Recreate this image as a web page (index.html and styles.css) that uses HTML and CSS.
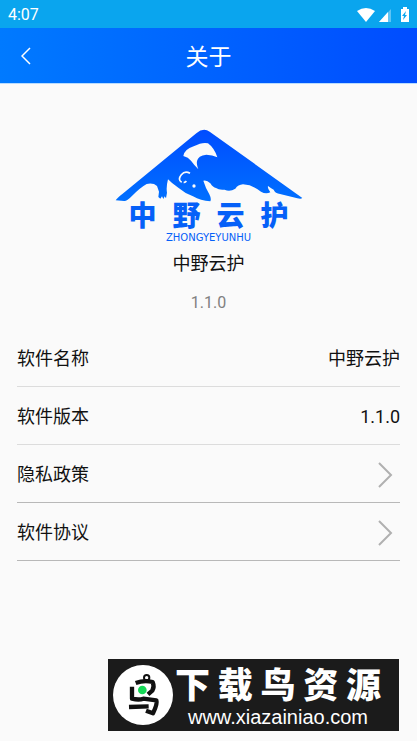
FILE: index.html
```html
<!DOCTYPE html>
<html lang="zh-CN">
<head>
<meta charset="utf-8">
<meta name="viewport" content="width=device-width, initial-scale=1">
<title>关于</title>
<link rel="stylesheet" href="styles.css">
</head>
<body>
<div class="status">
  <time>4:07</time>
  <svg class="status-icons" viewBox="0 0 52 16" aria-hidden="true">
    <path d="M0 4Q9-2 18 4L9 15Z" fill="#fff"/>
    <path d="M22 15L34 2V15Z" fill="#fff" opacity=".35"/>
    <path d="M22 15L31 5V15Z" fill="#fff"/>
    <path d="M44 2h2V0h4v2h2v13h-8Z" fill="#fff"/>
    <path d="M49 4l-4 5h2l-1 4 4-5h-2l1-4Z" fill="#0aa5ee"/>
  </svg>
</div>
<header class="bar">
  <button class="back" type="button" aria-label="返回">
    <svg viewBox="0 0 10 18" aria-hidden="true"><path d="M9 1L1 9l8 8"/></svg>
  </button>
  <h1>关于</h1>
</header>
<main>
  <section class="brand">
    <div class="logo">
      <svg class="mountain" viewBox="10 0 600 246" aria-hidden="true">
        <defs>
          <linearGradient id="sky" x1="0" y1="0" x2="0" y2="1">
            <stop offset="0" stop-color="#004cff"/><stop offset="1" stop-color="#0070ff"/>
          </linearGradient>
        </defs>
        <path fill="url(#sky)" d="M30 241Q35 233 50 222L272 40Q293 22 312 35L590 234Q586 238 575 235L520 221Q508 219 504 209Q496 205 487 198Q485 206 494 217Q480 223 466 215Q440 194 412 193Q397 194 389 206Q372 217 357 209Q340 211 331 204Q322 203 314 190Q303 179 293 182Q299 202 311 223Q318 237 314 244Q285 242 262 229Q238 220 218 203Q199 191 187 178Q181 202 184 218L181 235L177 229L173 237L169 229L164 236L158 231L160 215L154 198Q143 188 123 192Q103 203 78 229Q64 244 55 243Z"/>
        <path class="paper" d="M233 108Q236 88 264 79Q291 65 307 70Q326 84 335 112Q320 104 302 104Q277 107 274 123Q272 132 278 148Q264 133 256 122Q248 112 233 108Z"/>
        <path class="ear" d="M228 187Q215 179 227 164Q238 151 253 160M234 187q5 1 8-4"/>
        <circle class="paper" cx="265" cy="198" r="5"/>
      </svg>
      <div class="brush"><span>中</span><span>野</span><span>云</span><span>护</span></div>
      <div class="latin">ZHONGYEYUNHU</div>
    </div>
    <h2>中野云护</h2>
    <p>1.1.0</p>
  </section>
  <dl class="rows">
    <div class="row"><dt>软件名称</dt><dd>中野云护</dd></div>
    <div class="row"><dt>软件版本</dt><dd>1.1.0</dd></div>
  </dl>
  <nav class="rows">
    <a class="row" href="#privacy">隐私政策<svg viewBox="0 0 16 26" aria-hidden="true"><path d="M2 1l12 12L2 25"/></svg></a>
    <a class="row" href="#agreement">软件协议<svg viewBox="0 0 16 26" aria-hidden="true"><path d="M2 1l12 12L2 25"/></svg></a>
  </nav>
</main>
<footer class="banner">
  <svg class="bird" viewBox="0 0 180 180" aria-hidden="true">
    <circle cx="90" cy="90" r="90" fill="#fff"/>
    <g fill="none" stroke="#111" stroke-width="13" stroke-linejoin="round">
      <path d="M68 54Q93 45 119 51Q125 65 118 77L105 88"/>
      <path d="M57 65V101Q78 106 91 101L130 106Q134 117 120 145L99 137"/>
      <path d="M48 126L107 124"/>
      <circle cx="101" cy="38" r="8" stroke-width="6"/>
    </g>
    <circle cx="88" cy="75" r="13" fill="#16d957"/>
  </svg>
  <div class="banner-text">
    <div class="banner-name"><span>下</span><span>载</span><span>鸟</span><span>资</span><span>源</span></div>
    <div class="banner-url">www.xiazainiao.com</div>
  </div>
</footer>
</body>
</html>
```
FILE: styles.css
```css
* { box-sizing: border-box; }

body {
  margin: 0;
  min-height: 100vh;
  display: flex;
  flex-direction: column;
  background: #fafafa;
  color: #111;
  font: 18px/24px Roboto, "Noto Sans CJK SC", sans-serif;
}

svg { display: block; }
h1, h2, p, dl, dd { margin: 0; font-weight: 400; }

.status {
  display: flex;
  align-items: center;
  justify-content: space-between;
  height: 28px;
  padding: 2px 8px 0;
  background: #0aa5ee;
  color: #fff;
  font-size: 16px;
}
.status-icons { width: 52px; height: 16px; }

.bar {
  display: grid;
  grid-template-columns: 52px 1fr 52px;
  align-items: center;
  height: 56px;
  border-bottom: 1px solid #b8dcff;
  background: linear-gradient(90deg, #007aff, #004cff);
  color: #fff;
}
.bar h1 { padding-top: 4px; font-size: 23px; line-height: 32px; text-align: center; }
.back {
  display: grid;
  place-items: center;
  height: 55px;
  padding: 0;
  border: 0;
  background: none;
}
.back svg {
  width: 10px;
  height: 18px;
  fill: none;
  stroke: #fff;
  stroke-width: 1.5;
}

.brand {
  display: flex;
  flex-direction: column;
  align-items: center;
  padding-top: 36px;
  text-align: center;
}
.logo { width: 200px; color: #0560f8; }
.mountain { width: 200px; height: 82px; }
.paper { fill: #fafafa; }
.ear { fill: none; stroke: #fafafa; stroke-width: 5; }
.brush {
  display: grid;
  grid-template-columns: repeat(4, 1fr);
  padding: 0 12px;
  font: 900 28px/24px "Noto Sans CJK SC", sans-serif;
}
.latin { padding-top: 4px; font: 10px/16px "DejaVu Sans", sans-serif; }
.brand h2 { margin-top: 6px; font-size: 18px; line-height: 24px; }
.brand p {
  margin: 15px 0 14px;
  color: #808080;
  font-size: 16px;
  line-height: 24px;
}

.rows { padding: 0 17px; }
.row {
  display: flex;
  align-items: center;
  justify-content: space-between;
  height: 58px;
  padding-top: 2px;
  border-bottom: 1px solid #dcdcdc;
  color: #111;
  text-decoration: none;
}
a.row { border-color: #b8b8b8; }
.row svg {
  width: 16px;
  height: 26px;
  margin-right: 7px;
  fill: none;
  stroke: #b0b0b0;
  stroke-width: 2;
}

.banner {
  display: flex;
  align-items: center;
  align-self: flex-end;
  height: 72px;
  margin: auto 18px 10px;
  padding: 0 16px 0 5px;
  background: #1b1b1b;
  color: #fff;
}
.bird { width: 60px; height: 60px; }
.banner-text { width: 210px; padding: 4px 2px 0; text-align: center; }
.banner-name {
  display: flex;
  justify-content: space-between;
  font: 900 35px/36px "Noto Sans CJK SC", sans-serif;
}
.banner-url { padding-top: 4px; font: 20px/24px "Liberation Sans", sans-serif; }
```
